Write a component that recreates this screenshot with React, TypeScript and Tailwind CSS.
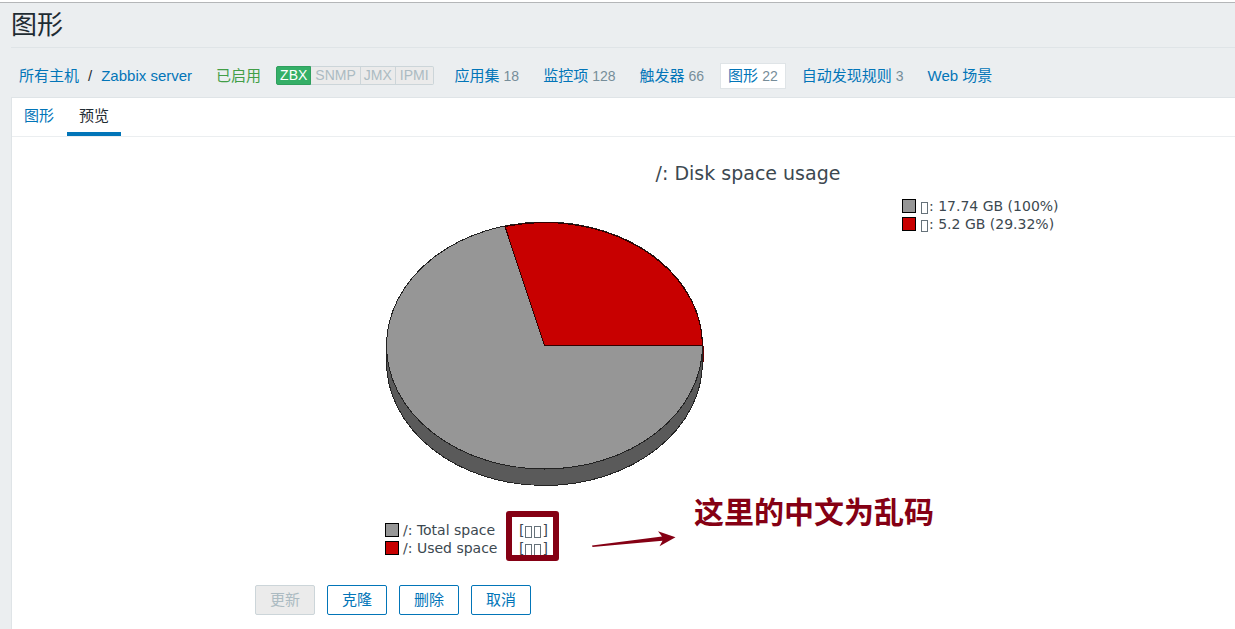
import type { ReactNode } from "react";

const links = [
  { label: "应用集", count: 18 },
  { label: "监控项", count: 128 },
  { label: "触发器", count: 66 },
  { label: "图形", count: 22, active: true },
  { label: "自动发现规则", count: 3 },
  { label: "Web 场景" },
];

function MissingGlyph() {
  return (
    <span className="mx-px inline-block h-3 w-[7px] border border-[#66727a] align-[-3px]" />
  );
}

function LegendRow({ red, children }: { red?: boolean; children: ReactNode }) {
  return (
    <li className="flex h-[18px] items-center gap-1">
      <span
        className={`size-[14px] shrink-0 border border-black ${red ? "bg-[#c80000]" : "bg-[#969696]"}`}
      />
      <span className="whitespace-nowrap">{children}</span>
    </li>
  );
}

function Pie() {
  return (
    <svg
      width="320"
      height="268"
      viewBox="0 0 320 268"
      className="shrink-0"
      shapeRendering="crispEdges"
      role="img"
      aria-label="Disk space usage"
    >
      <path
        d="M1.5 126V142A158 123.5 0 0 0 317.5 142V126Z"
        fill="#5a5a5a"
        stroke="#222"
      />
      <path d="M318.5 126V142" stroke="#640000" />
      <ellipse cx="159.5" cy="125.5" rx="158" ry="123.5" fill="#969696" stroke="#222" />
      <path
        d="M159.5 125.5L120 6.5A158 123.5 0 0 1 317.5 125.5Z"
        fill="#c80000"
        stroke="#300"
      />
    </svg>
  );
}

export default function App() {
  return (
    <div className="min-h-screen overflow-x-hidden border-t-2 border-white bg-[#ebeef0] font-['Liberation_Sans','Noto_Sans_CJK_SC',sans-serif] text-[15px] leading-5 text-[#1f2c33]">
      <div className="border-t border-[#b4b6b8] pl-[11px]">
        <h1 className="h-[45px] border-b border-[#dfe4e7] text-[26px] leading-[44px]">图形</h1>

        <nav className="flex h-[49px] items-center whitespace-nowrap pb-px pl-2 pt-[7px] text-[#0275b8]">
          <a href="#hosts">所有主机</a>
          <span className="mx-[9px] text-[#1f2c33]">/</span>
          <a href="#server">Zabbix server</a>
          <span className="ml-6 text-[#429e47]">已启用</span>
          <span className="ml-[15px] flex h-[19px] items-center text-[14px] leading-[17px] text-[#acbbc2]">
            <span className="rounded-l-xs border border-[#2f9f5e] bg-[#34af67] px-[3px] text-white">ZBX</span>
            <span className="border-y border-r border-[#ccd5d9] bg-[#ebebeb] px-1">SNMP</span>
            <span className="border-y border-r border-[#ccd5d9] bg-[#ebebeb] px-[3px]">JMX</span>
            <span className="rounded-r-xs border-y border-r border-[#ccd5d9] bg-[#ebebeb] px-1">IPMI</span>
          </span>
          <ul className="ml-[13px] flex items-center gap-2">
            {links.map((l) => (
              <li
                key={l.label}
                className={`border px-[7px] py-[2px] ${l.active ? "border-[#dfe4e7] bg-white" : "border-transparent"}`}
              >
                <a href="#section">{l.label}</a>
                {l.count !== undefined && (
                  <span className="ml-1 text-[14px] text-[#768d99]">{l.count}</span>
                )}
              </li>
            ))}
          </ul>
        </nav>

        <main className="min-h-[532px] border-l border-t border-[#dfe4e7] bg-white">
          <div className="flex h-[39px] gap-px border-b border-[#ebeef0]">
            <a href="#graph" className="px-3 pt-2 text-[#0275b8]">图形</a>
            <a href="#preview" className="border-b-4 border-[#0275b8] px-3 pt-2">预览</a>
          </div>

          <section className="pl-[243px]">
            <div className="font-['DejaVu_Sans',sans-serif] text-[14px] leading-[18px] text-[#3c4850]">
              <h2 className="pl-[6px] pt-6 text-center text-[19px] leading-6">/: Disk space usage</h2>
              <div className="flex pl-[130px] pt-3">
                <div className="pt-[23px]">
                  <Pie />
                </div>
                <ul className="ml-[197px]">
                  <LegendRow><MissingGlyph />: 17.74 GB (100%)</LegendRow>
                  <LegendRow red><MissingGlyph />: 5.2 GB (29.32%)</LegendRow>
                </ul>
              </div>

              <div className="flex pl-[130px] pt-px">
                <ul className="w-[134px] pt-8">
                  <LegendRow>/: Total space</LegendRow>
                  <LegendRow red>/: Used space</LegendRow>
                </ul>
                <div className="relative mt-8 h-9 w-7 whitespace-nowrap">
                  <div>[<MissingGlyph /><MissingGlyph />]</div>
                  <div>[<MissingGlyph /><MissingGlyph />]</div>
                  <span className="absolute -left-[13px] -top-[10px] h-[50px] w-[53px] rounded-[3px] border-6 border-[#850014]" />
                </div>
                <svg
                  width="84"
                  height="18"
                  viewBox="0 0 84 18"
                  className="ml-[45px] mt-[41px] shrink-0"
                  fill="#850014"
                  aria-hidden="true"
                >
                  <path d="M0 15.5L70 6.5L66 1.3L83.5 7.3L67.5 16.3L70.5 10.8L.5 17Z" />
                </svg>
                <p className="ml-[18px] mt-[2px] whitespace-nowrap font-['Noto_Sans_CJK_SC',sans-serif] text-[30px] font-bold leading-[38px] text-[#850014]">
                  这里的中文为乱码
                </p>
              </div>
            </div>

            <div className="flex gap-3 pt-7 text-[#0275b8]">
              <button disabled className="h-[30px] w-[60px] rounded-xs border border-[#ccd5d9] bg-[#ebebeb] text-[#acbbc2]">更新</button>
              <button className="h-[30px] w-[60px] rounded-xs border border-[#0275b8]">克隆</button>
              <button className="h-[30px] w-[60px] rounded-xs border border-[#0275b8]">删除</button>
              <button className="h-[30px] w-[60px] rounded-xs border border-[#0275b8]">取消</button>
            </div>
          </section>
        </main>
      </div>
    </div>
  );
}
